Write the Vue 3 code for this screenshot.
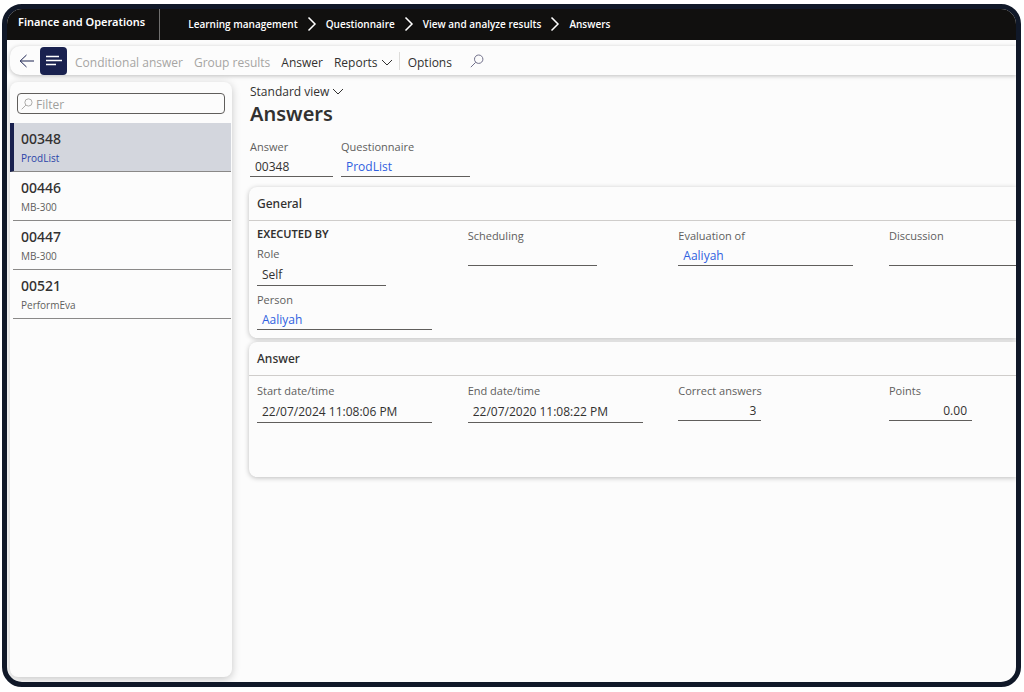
<template>
  <div class="window">
    <header class="topbar">
      <div class="brand">Finance and Operations</div>
      <nav class="crumbs" aria-label="Breadcrumb">
        <template v-for="(crumb, i) in crumbs" :key="crumb">
          <svg v-if="i > 0" class="crumb-arrow" viewBox="0 0 10 16">
            <path d="M1.5 1.5 8 8l-6.5 6.5" />
          </svg>
          <a href="#">{{ crumb }}</a>
        </template>
      </nav>
    </header>

    <div class="toolbar">
      <button class="back" aria-label="Back">
        <svg viewBox="0 0 16 14"><path d="M7.5 1 1.2 7l6.3 6M1.2 7H15" /></svg>
      </button>
      <button class="list-toggle" aria-label="Show list">
        <svg viewBox="0 0 16 12"><path d="M0 1.5h13M0 5.5h16M0 9.5h10" /></svg>
      </button>
      <button class="tool" disabled>Conditional answer</button>
      <button class="tool" disabled>Group results</button>
      <button class="tool">Answer</button>
      <button class="tool">
        Reports
        <svg class="chevron" viewBox="0 0 12 8"><path d="M1 1l5 5 5-5" /></svg>
      </button>
      <span class="divider"></span>
      <button class="tool">Options</button>
      <button class="search" aria-label="Search">
        <svg viewBox="0 0 14 14"><circle cx="8.7" cy="5.2" r="4.2" /><path d="M5.7 8.3.8 13.2" /></svg>
      </button>
    </div>

    <div class="content">
      <aside class="sidebar">
        <div class="filter">
          <svg viewBox="0 0 14 14"><circle cx="8.7" cy="5.2" r="4.2" /><path d="M5.7 8.3.8 13.2" /></svg>
          <input v-model="filter" type="text" placeholder="Filter" aria-label="Filter" />
        </div>
        <button
          v-for="item in visibleItems"
          :key="item.id"
          class="item"
          :class="{ active: item.id === selected }"
          @click="selected = item.id"
        >
          <span class="item-id">{{ item.id }}</span>
          <span class="item-name">{{ item.name }}</span>
        </button>
      </aside>

      <main class="main">
        <button class="view">
          Standard view
          <svg class="chevron" viewBox="0 0 12 8"><path d="M1 1l5 5 5-5" /></svg>
        </button>
        <h1>Answers</h1>

        <div class="head-fields">
          <div class="field small">
            <label for="answer">Answer</label>
            <input id="answer" class="value" value="00348" readonly />
          </div>
          <div class="field medium">
            <span id="questionnaire" class="caption">Questionnaire</span>
            <a class="value" href="#" aria-describedby="questionnaire">ProdList</a>
          </div>
        </div>

        <section class="card">
          <h2>General</h2>
          <div class="columns">
            <div class="column">
              <h3>EXECUTED BY</h3>
              <div class="field medium tall">
                <label for="role">Role</label>
                <input id="role" class="value" value="Self" readonly />
              </div>
              <div class="field wide">
                <span id="person" class="caption">Person</span>
                <a class="value" href="#" aria-describedby="person">Aaliyah</a>
              </div>
            </div>
            <div class="field medium">
              <label for="scheduling">Scheduling</label>
              <input id="scheduling" class="value" readonly />
            </div>
            <div class="field wide">
              <span id="evaluation" class="caption">Evaluation of</span>
              <a class="value" href="#" aria-describedby="evaluation">Aaliyah</a>
            </div>
            <div class="field">
              <label for="discussion">Discussion</label>
              <input id="discussion" class="value" readonly />
            </div>
          </div>
        </section>

        <section class="card answer-card">
          <h2>Answer</h2>
          <div class="columns">
            <div class="field wide tall">
              <label for="start">Start date/time</label>
              <input id="start" class="value" value="22/07/2024 11:08:06 PM" readonly />
            </div>
            <div class="field wide tall">
              <label for="end">End date/time</label>
              <input id="end" class="value" value="22/07/2020 11:08:22 PM" readonly />
            </div>
            <div class="field small number">
              <label for="correct">Correct answers</label>
              <input id="correct" class="value" value="3" readonly />
            </div>
            <div class="field small number">
              <label for="points">Points</label>
              <input id="points" class="value" value="0.00" readonly />
            </div>
          </div>
        </section>
      </main>
    </div>
  </div>
</template>

<script setup>
import { ref, computed } from 'vue'

const crumbs = ['Learning management', 'Questionnaire', 'View and analyze results', 'Answers']

const items = [
  { id: '00348', name: 'ProdList' },
  { id: '00446', name: 'MB-300' },
  { id: '00447', name: 'MB-300' },
  { id: '00521', name: 'PerformEva' }
]

const filter = ref('')
const selected = ref('00348')

const visibleItems = computed(() => {
  const text = filter.value.toLowerCase()
  return items.filter((item) => (item.id + ' ' + item.name).toLowerCase().includes(text))
})
</script>

<style>
body {
  background: #fff;
}
</style>

<style scoped>
* {
  box-sizing: border-box;
}

.window {
  display: flex;
  flex-direction: column;
  min-height: calc(100vh - 9px);
  margin: 4px 3px 5px 2px;
  border: 5px solid #101828;
  border-radius: 20px;
  background: #fcfcfc;
  overflow: hidden;
  color: #323130;
  font-family: 'Open Sans', 'Noto Sans', sans-serif;
  font-size: 12px;
  line-height: 16px;
}

button,
input {
  padding: 0;
  border: 0;
  background: none;
  color: inherit;
  font: inherit;
}

a {
  color: inherit;
  text-decoration: none;
}

svg {
  fill: none;
  stroke: currentColor;
  flex: none;
}

/* top bar */
.topbar {
  display: flex;
  height: 31px;
  background: #11100f;
  color: #fff;
}

.brand {
  padding: 5px 14px 0 11px;
  border-right: 1px solid #706f6e;
  font-family: 'Noto Sans', sans-serif;
  font-size: 11px;
  font-weight: 600;
}

.crumbs {
  display: flex;
  align-items: center;
  gap: 9px;
  padding: 0 0 2px 28px;
  font-size: 10px;
  font-weight: 600;
}

.crumb-arrow {
  width: 10px;
  height: 16px;
  stroke-width: 1.5;
}

/* action bar */
.toolbar {
  display: flex;
  align-items: center;
  gap: 1px;
  height: 29px;
  margin: 6px 0 0 3px;
  border-radius: 10px 0 0 10px;
  background: #fcfcfc;
  box-shadow: 0 1px 4px rgba(0, 0, 0, 0.25);
}

.back {
  width: 29px;
  height: 28px;
  padding-left: 9px;
  color: #1b2250;
}

.back svg {
  display: block;
  width: 16px;
  height: 14px;
}

.list-toggle {
  display: grid;
  place-items: center;
  width: 27px;
  height: 28px;
  margin-right: 2px;
  border-radius: 4px;
  background: #19214f;
  color: #fff;
}

.list-toggle svg {
  width: 16px;
  height: 12px;
  stroke-width: 1.4;
}

.tool {
  padding: 4px 5px 0;
}

.tool:disabled {
  color: #a6a5a3;
}

.chevron {
  width: 12px;
  height: 8px;
}

.divider {
  width: 1px;
  height: 18px;
  margin-right: 2px;
  background: #dddcda;
}

.search {
  margin-left: 12px;
  color: #706f8a;
}

.search svg {
  display: block;
  width: 14px;
  height: 14px;
}

.content {
  display: flex;
  flex: 1;
  padding: 7px 0 5px 3px;
}

/* record list */
.sidebar {
  flex: none;
  width: 222px;
  border-radius: 8px;
  background: #fcfcfc;
  box-shadow: 0 2px 8px rgba(0, 0, 0, 0.22);
}

.filter {
  display: flex;
  align-items: center;
  gap: 3px;
  height: 21px;
  margin: 11px 7px 9px;
  padding: 0 3px;
  border: 1px solid #605e5c;
  border-radius: 4px;
  color: #a09f9d;
}

.filter svg {
  width: 12px;
  height: 12px;
}

.filter input {
  flex: 1;
  min-width: 0;
  padding-top: 2px;
  outline: none;
}

.filter input::placeholder {
  color: #a09f9d;
  opacity: 1;
}

.item {
  display: block;
  width: 218px;
  height: 49px;
  margin-left: 3px;
  padding: 0 8px;
  border-bottom: 1px solid #8a8988;
  text-align: left;
}

.item.active {
  width: 221px;
  margin-left: 0;
  border-left: 4px solid #19214f;
  padding-left: 7px;
  background: #d3d6dd;
}

.item span {
  display: block;
}

.item-id {
  font-family: 'Noto Sans', sans-serif;
  font-size: 14px;
  font-weight: 500;
  line-height: 22px;
}

.item-name {
  color: #605e5c;
  font-size: 10px;
}

.active .item-name {
  color: #2b44a8;
}

/* form */
.main {
  flex: 1;
  min-width: 0;
  padding: 2px 0 0 17px;
}

.view {
  display: block;
  margin-left: 1px;
}

h1 {
  margin: 1px 0 12px 1px;
  font-family: 'Noto Sans', sans-serif;
  font-size: 20px;
  font-weight: 600;
  line-height: 26px;
}

.head-fields {
  display: flex;
  gap: 8px;
  margin: 0 0 10px 1px;
}

.field {
  display: flex;
  flex-direction: column;
}

.field label,
.caption {
  color: #605e5c;
  font-size: 11px;
  white-space: nowrap;
}

.value {
  width: 100%;
  height: 22px;
  padding: 2px 5px 0;
  border-bottom: 1px solid #605e5c;
  line-height: 20px;
  outline: none;
}

.tall .value {
  height: 24px;
}

a.value {
  color: #2f5fe0;
}

.number .value {
  text-align: right;
}

.small {
  width: 83px;
}

.medium {
  width: 129px;
}

.wide {
  width: 175px;
}

.card {
  margin-bottom: 4px;
  border-radius: 8px 0 0 8px;
  background: #fcfcfc;
  box-shadow: 0 1px 5px rgba(0, 0, 0, 0.25);
}

h2 {
  margin: 0;
  padding: 9px 8px 8px;
  border-bottom: 1px solid #cfcdcb;
  font-family: 'Noto Sans', sans-serif;
  font-size: 12px;
  font-weight: 500;
}

.columns {
  display: grid;
  grid-template-columns: repeat(3, 1fr) 127px;
  padding: 7px 0 8px 8px;
}

.column {
  display: flex;
  flex-direction: column;
  gap: 6px;
}

h3 {
  margin: 0;
  font-family: 'Noto Sans', sans-serif;
  font-size: 11px;
  font-weight: 600;
  line-height: 12px;
}

.answer-card .columns {
  padding-bottom: 54px;
}
</style>
